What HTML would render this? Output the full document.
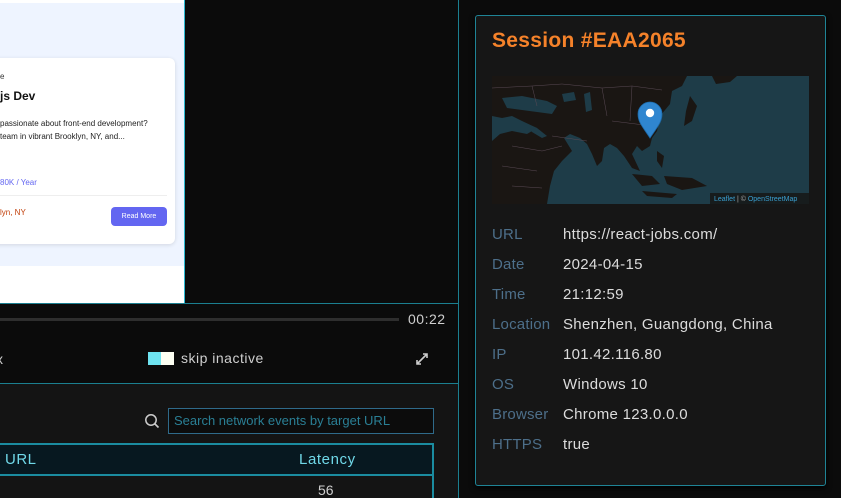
<!DOCTYPE html>
<html><head><meta charset="utf-8">
<style>
*{margin:0;padding:0;box-sizing:border-box}
body{width:841px;height:498px;overflow:hidden;background:#0b0b0b;font-family:"Liberation Sans",sans-serif;position:relative}
.a{position:absolute}
.lbl{position:absolute;left:492px;color:#4d6f8a;font-size:15px;letter-spacing:.2px}
.val{position:absolute;left:563px;color:#dcdcdc;font-size:15px;letter-spacing:.3px}
</style></head><body>
<div class="a" style="left:0;top:0;width:184px;height:303px;background:#fff"></div>
<div class="a" style="left:0;top:3px;width:184px;height:263px;background:#eef4ff"></div>
<div class="a" style="left:-10px;top:58px;width:185px;height:186px;background:#fff;border-radius:6px;box-shadow:0 1px 4px rgba(0,0,0,.12)"></div>
<div class="a" style="left:0;top:72px;font-size:8px;color:#333">e</div>
<div class="a" style="left:0;top:89px;font-size:12px;font-weight:bold;color:#111">js Dev</div>
<div class="a" style="left:0;top:117px;font-size:8px;color:#222;line-height:13px;white-space:nowrap">passionate about front-end development?<br>team in vibrant Brooklyn, NY, and...</div>
<div class="a" style="left:0;top:178px;font-size:8px;color:#6366f1">80K / Year</div>
<div class="a" style="left:0;top:195px;width:167px;height:1px;background:#eee"></div>
<div class="a" style="left:0;top:208px;font-size:8px;color:#c2410c">lyn, NY</div>
<div class="a" style="left:111px;top:207px;width:56px;height:19px;background:#6366f1;border-radius:4px;color:#fff;font-size:7px;text-align:center;line-height:19px">Read More</div>
<div class="a" style="left:184px;top:0;width:1px;height:303px;background:#2bb7d0"></div>
<div class="a" style="left:0;top:303px;width:459px;height:1px;background:#1b7f90"></div>
<div class="a" style="left:458px;top:0;width:1px;height:498px;background:#1b7f90"></div>
<div class="a" style="left:0;top:318px;width:399px;height:3px;background:#2e2e2e"></div>
<div class="a" style="left:408px;top:311px;font-size:14px;color:#cfcfcf;letter-spacing:.5px">00:22</div>
<div class="a" style="left:-4px;top:351px;font-size:14px;color:#ccc">x</div>
<div class="a" style="left:148px;top:352px;width:13px;height:13px;background:#6ee3f0"></div>
<div class="a" style="left:161px;top:352px;width:13px;height:13px;background:#fdfff2"></div>
<div class="a" style="left:181px;top:350px;font-size:14px;color:#cfcfcf;letter-spacing:.5px">skip inactive</div>
<svg class="a" style="left:414px;top:351px" width="16" height="16" viewBox="0 0 16 16"><path d="M3 13L13 3M9 3h4v4M3 9v4h4" stroke="#ccc" stroke-width="1.6" fill="none"/></svg>
<div class="a" style="left:0;top:383px;width:458px;height:1px;background:#1b7f90"></div>
<div class="a" style="left:0;top:384px;width:458px;height:114px;background:#141414"></div>
<svg class="a" style="left:144px;top:413px" width="16" height="16" viewBox="0 0 16 16"><circle cx="7" cy="7" r="5.2" stroke="#ccc" stroke-width="1.5" fill="none"/><path d="M11 11l3.5 3.5" stroke="#ccc" stroke-width="1.6"/></svg>
<div class="a" style="left:168px;top:408px;width:266px;height:26px;border:1px solid #2f6a8a;background:#0c0c0c;color:#2a7f95;font-size:13px;line-height:24px;padding-left:5px">Search network events by target URL</div>
<div class="a" style="left:-2px;top:443px;width:436px;height:33px;background:#071820;border:2px solid #1b8ca0"></div>
<div class="a" style="left:5px;top:451px;font-size:15px;color:#70d8e8;letter-spacing:.5px">URL</div>
<div class="a" style="left:299px;top:451px;font-size:15px;color:#70d8e8;letter-spacing:.6px">Latency</div>
<div class="a" style="left:432px;top:476px;width:2px;height:22px;background:#1b8ca0"></div>
<div class="a" style="left:318px;top:482px;font-size:14px;color:#cfcfcf">56</div>
<div class="a" style="left:475px;top:15px;width:351px;height:471px;background:#161616;border:1px solid #1f8496;border-radius:3px;box-shadow:0 2px 6px #000"></div>
<div class="a" style="left:492px;top:29px;font-size:21px;font-weight:bold;color:#f5822a;letter-spacing:.3px">Session #EAA2065</div>
<svg class="a" style="left:492px;top:76px" width="317" height="128" viewBox="0 0 317 128">
<rect width="317" height="128" fill="#1e3c48"/>
<path d="M0 0H195L190 10 180 15 178 28 168 40 165 55 160 62 158 70 150 75 145 70 140 78 148 95 140 92 132 80 125 72 118 68 112 72 110 85 105 90 100 78 95 68 88 62 78 58 72 62 80 75 70 85 62 95 58 110 55 128H0V65 L8 58 20 55 35 58 45 52 30 45 20 40 10 42 0 40Z" fill="#1a1613"/>
<path d="M10 22L30 20 55 25 65 30 60 38 45 36 30 34 15 32Z" fill="#1e3c48"/>
<path d="M70 18L82 16 84 24 72 26Z" fill="#1e3c48"/>
<path d="M92 18L98 16 100 34 94 36Z" fill="#1e3c48"/>
<path d="M30 46L45 52 55 60 50 62 40 56Z" fill="#1e3c48"/>
<path d="M198 20L205 30 200 45 192 50 194 35Z" fill="#1a1613"/>
<path d="M220 0H245L238 6 224 8Z" fill="#1a1613"/>
<path d="M165 75L172 80 170 92 165 85Z" fill="#1a1613"/>
<path d="M140 98L160 100 168 108 150 110Z" fill="#1a1613"/>
<path d="M172 100L200 102 215 110 190 114 175 108Z" fill="#1a1613"/>
<path d="M150 115L185 118 180 122 155 120Z" fill="#1a1613"/>
<g stroke="#5a4a55" stroke-width=".5" fill="none"><path d="M0 12L40 10 70 8 110 12 140 10 170 14M40 10L45 30M110 12L115 40M140 10L138 45M20 70L50 75 70 70M10 90L45 95M20 110L50 112M60 60L95 65M120 45L160 50"/></g>
<rect x="218" y="117" width="99" height="11" fill="#161616" opacity=".85"/>
<text x="222" y="125" font-size="7" fill="#3a9fd0" font-family="Liberation Sans">Leaflet <tspan fill="#aaa">| ©</tspan> OpenStreetMap</text>
<path d="M158 62C150 50 146 46 146 38a12 12 0 0 1 24 0c0 8-4 12-12 24Z" fill="#2f86d0" stroke="#1d6aa8" stroke-width=".8"/>
<circle cx="158" cy="37" r="4.2" fill="#fff"/>
</svg>
<div class="lbl" style="top:226px">URL</div><div class="val" style="top:226px">https://react-jobs.com/</div>
<div class="lbl" style="top:256px">Date</div><div class="val" style="top:256px">2024-04-15</div>
<div class="lbl" style="top:286px">Time</div><div class="val" style="top:286px">21:12:59</div>
<div class="lbl" style="top:316px">Location</div><div class="val" style="top:316px">Shenzhen, Guangdong, China</div>
<div class="lbl" style="top:346px">IP</div><div class="val" style="top:346px">101.42.116.80</div>
<div class="lbl" style="top:376px">OS</div><div class="val" style="top:376px">Windows 10</div>
<div class="lbl" style="top:406px">Browser</div><div class="val" style="top:406px">Chrome 123.0.0.0</div>
<div class="lbl" style="top:436px">HTTPS</div><div class="val" style="top:436px">true</div>
</body></html>
